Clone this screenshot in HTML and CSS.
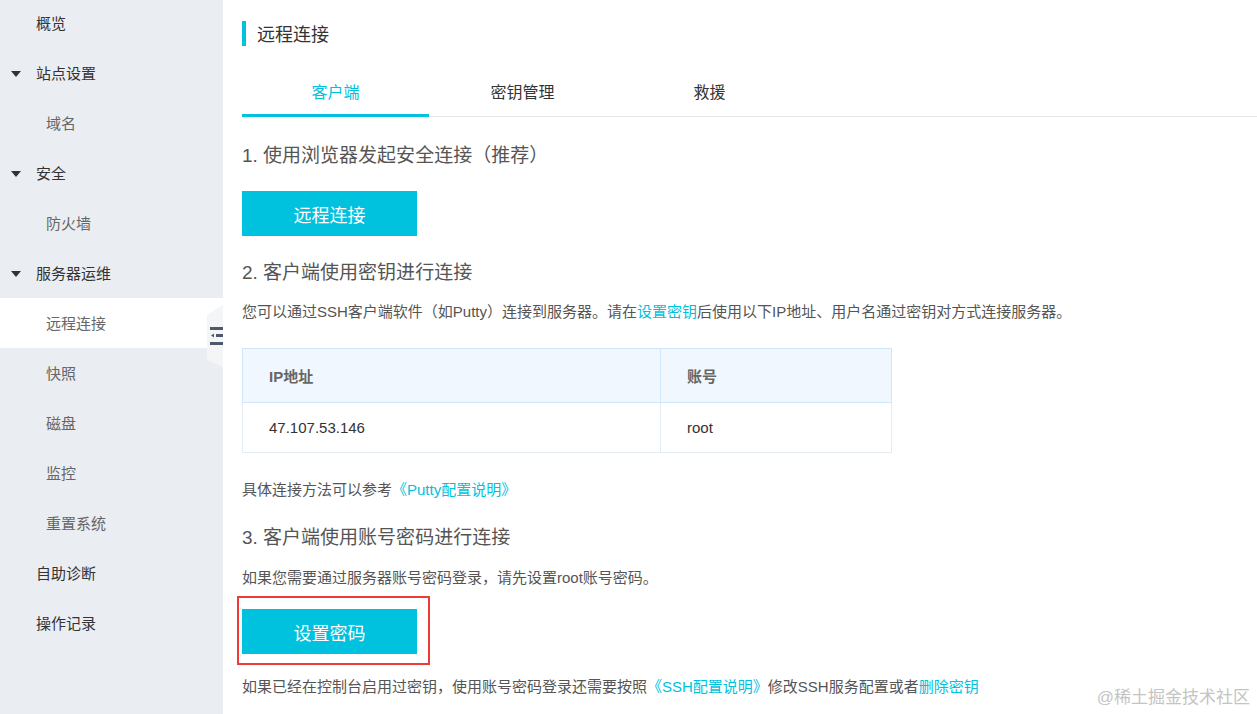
FILE: index.html
```html
<!DOCTYPE html>
<html lang="zh-CN">
<head>
<meta charset="utf-8">
<title>远程连接</title>
<link rel="stylesheet" href="styles.css">
</head>
<body>
<div class="page">
  <aside class="sidebar">
    <ul class="menu">
      <li class="item top">概览</li>
      <li class="item top group"><span class="caret"></span>站点设置</li>
      <li class="item sub">域名</li>
      <li class="item top group"><span class="caret"></span>安全</li>
      <li class="item sub">防火墙</li>
      <li class="item top group"><span class="caret"></span>服务器运维</li>
      <li class="item sub active">远程连接</li>
      <li class="item sub">快照</li>
      <li class="item sub">磁盘</li>
      <li class="item sub">监控</li>
      <li class="item sub">重置系统</li>
      <li class="item top">自助诊断</li>
      <li class="item top">操作记录</li>
    </ul>
    <div class="collapse">
      <svg width="13" height="19" viewBox="0 0 13 19">
        <rect x="0" y="0" width="13" height="3" fill="#4d586b"/>
        <rect x="6" y="7" width="7" height="3" fill="#4d586b"/>
        <polygon points="1,8.5 4,6.5 4,10.5" fill="#4d586b"/>
        <rect x="0" y="15" width="13" height="3" fill="#4d586b"/>
      </svg>
    </div>
  </aside>
  <main class="main">
    <h1 class="title">远程连接</h1>
    <div class="tabs">
      <div class="tab active">客户端</div>
      <div class="tab">密钥管理</div>
      <div class="tab">救援</div>
    </div>
    <div class="content">
      <h2 class="step s1">1. 使用浏览器发起安全连接（推荐）</h2>
      <button class="btn b1">远程连接</button>
      <h2 class="step s2">2. 客户端使用密钥进行连接</h2>
      <p class="text t1">您可以通过SSH客户端软件（如Putty）连接到服务器。请在<a class="link">设置密钥</a>后使用以下IP地址、用户名通过密钥对方式连接服务器。</p>
      <table class="info">
        <thead>
          <tr><th class="c1">IP地址</th><th class="c2">账号</th></tr>
        </thead>
        <tbody>
          <tr><td class="c1">47.107.53.146</td><td class="c2">root</td></tr>
        </tbody>
      </table>
      <p class="text t2">具体连接方法可以参考<a class="link">《Putty配置说明》</a></p>
      <h2 class="step s3">3. 客户端使用账号密码进行连接</h2>
      <p class="text t3">如果您需要通过服务器账号密码登录，请先设置root账号密码。</p>
      <div class="mark">
        <button class="btn">设置密码</button>
      </div>
      <p class="text t4">如果已经在控制台启用过密钥，使用账号密码登录还需要按照<a class="link">《SSH配置说明》</a>修改SSH服务配置或者<a class="link">删除密钥</a></p>
    </div>
  </main>
  <div class="watermark">@稀土掘金技术社区</div>
</div>
</body>
</html>
```

FILE: styles.css
```css
* { box-sizing: border-box; }
html, body {
  margin: 0;
  padding: 0;
  background: #fff;
  font-family: "Liberation Sans", "Noto Sans CJK SC", sans-serif;
  overflow: hidden;
}
.page {
  display: flex;
  width: 1257px;
  height: 714px;
  position: relative;
}
.sidebar {
  width: 223px;
  flex: 0 0 223px;
  background: #eaedf1;
  position: relative;
}
.menu {
  list-style: none;
  margin: -2px 0 0 0;
  padding: 0;
}
.item {
  height: 50px;
  line-height: 52px;
  font-size: 15px;
  white-space: nowrap;
}
.item.top { padding-left: 36px; color: #333; position: relative; }
.item.sub { padding-left: 46px; color: #666; }
.item.active { background: #fff; }
.caret {
  position: absolute;
  left: 11px;
  top: 23px;
  width: 0;
  height: 0;
  border-left: 5.5px solid transparent;
  border-right: 5.5px solid transparent;
  border-top: 6px solid #333;
}
.collapse {
  position: absolute;
  left: 207px;
  top: 305px;
  width: 16px;
  height: 62px;
  background: #f4f5f6;
  clip-path: polygon(0 10px, 100% 0, 100% 100%, 0 55px);
  padding: 22px 0 0 3px;
}
.collapse svg { display: block; }

.main {
  flex: 1;
  padding-left: 19px;
  min-width: 0;
}
.title {
  margin: 21px 0 0 0;
  height: 25px;
  line-height: 28px;
  border-left: 4px solid #00c1de;
  padding-left: 11px;
  font-size: 18px;
  font-weight: normal;
  color: #333;
}
.tabs {
  margin-top: 22px;
  display: flex;
  border-bottom: 1px solid #e6e6e6;
  height: 49px;
}
.tab {
  width: 187px;
  height: 48px;
  line-height: 50px;
  text-align: center;
  font-size: 16px;
  color: #333;
}
.tab.active {
  color: #00c1de;
  border-bottom: 3px solid #00c1de;
  height: 49px;
  line-height: 50px;
  margin-bottom: -1px;
}
.content {
  display: flex;
  flex-direction: column;
  align-items: flex-start;
}
.step {
  margin: 0;
  font-size: 19px;
  font-weight: normal;
  color: #555;
  line-height: 24px;
  height: 24px;
  white-space: nowrap;
}
.s1 { margin-top: 27px; }
.s2 { margin-top: 25px; }
.s3 { margin-top: 26px; }
.btn {
  display: block;
  width: 175px;
  height: 45px;
  border: none;
  background: #00c1de;
  color: #fff;
  font-family: inherit;
  font-size: 18px;
  padding: 0;
  margin: 0;
}
.b1 { margin-top: 23px; }
.text {
  margin: 0;
  font-size: 15px;
  line-height: 20px;
  height: 20px;
  color: #555;
  white-space: nowrap;
}
.t1 { margin-top: 17px; }
.t2 { margin-top: 27px; }
.t3 { margin-top: 18px; }
.t4 { margin-top: 12px; }
.link { color: #00c1de; text-decoration: none; }
.info {
  margin-top: 26px;
  width: 650px;
  border-collapse: collapse;
  font-size: 15px;
}
.info th, .info td {
  text-align: left;
  padding: 0 0 0 26px;
}
.info th {
  height: 54px;
  background: #f0f7fe;
  border: 1px solid #cfe6fb;
  color: #666;
  font-weight: bold;
}
.info td {
  height: 50px;
  border: 1px solid #e3ebf3;
  border-top: none;
  color: #333;
}
.info .c1 { width: 418px; }
.mark {
  margin: 8px 0 0 -5px;
  border: 2px solid #ef3a3a;
  padding: 11px 11px 9px 3px;
}
.watermark {
  position: absolute;
  right: 7px;
  bottom: 5px;
  font-size: 17px;
  color: #c4c4c4;
  line-height: 22px;
  white-space: nowrap;
}
```
